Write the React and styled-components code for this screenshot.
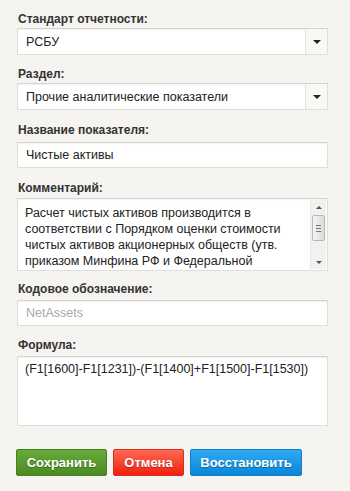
import React from 'react';
import styled, { createGlobalStyle } from 'styled-components';

const GlobalStyle = createGlobalStyle`
    body {
        margin: 0;
        background: #f5f4f0;
        font-family: "Liberation Sans", Arial, sans-serif;
        color: #222;
    }
`;

const Form = styled.div`
    width: 311px;
    padding: 11px 0 0 17px;
`;

const Group = styled.div`
    margin-bottom: ${p => p.gap || 11}px;
`;

const Label = styled.div`
    font-size: 12px;
    font-weight: bold;
    line-height: 16px;
    color: #333;
    margin-bottom: ${p => p.space || 1}px;
    padding-left: 1px;
`;

const Box = styled.div`
    box-sizing: border-box;
    background: #fff;
    border: 1px solid #e1ded9;
    border-top-color: #d6d3ce;
    box-shadow: inset 0 1px 2px rgba(0, 0, 0, 0.06);
    font-size: 12.5px;
    line-height: 16px;
`;

const Select = styled(Box)`
    height: 27px;
    display: flex;
    align-items: stretch;
`;

const SelectText = styled.div`
    flex: 1;
    display: flex;
    align-items: center;
    padding-left: 8px;
    color: #222;
`;

const Arrow = styled.div`
    width: 21px;
    border-left: 1px solid #e6e3de;
    background: #f8f8f7;
    display: flex;
    align-items: center;
    justify-content: center;

    &::after {
        content: "";
        border-left: 4px solid transparent;
        border-right: 4px solid transparent;
        border-top: 4px solid #222;
    }
`;

const Input = styled(Box)`
    height: 26px;
    display: flex;
    align-items: center;
    padding-left: 8px;
    color: ${p => p.muted ? '#aaa' : '#222'};
`;

const TextBox = styled(Box)`
    height: ${p => p.h}px;
    display: flex;
    overflow: hidden;
`;

const Text = styled.div`
    flex: 1;
    padding: ${p => p.top || 6}px 6px 0 7px;
    white-space: nowrap;
`;

const Scrollbar = styled.div`
    width: 15px;
    margin: 1px 1px 1px 0;
    background: #f1f1f0;
    border-left: 1px solid #e9e8e6;
    display: flex;
    flex-direction: column;
    align-items: center;
`;

const ScrollBtn = styled.div`
    height: 14px;
    width: 100%;
    display: flex;
    align-items: center;
    justify-content: center;

    &::after {
        content: "";
        border-left: 3px solid transparent;
        border-right: 3px solid transparent;
        ${p => p.down ? 'border-top: 3px solid #555;' : 'border-bottom: 3px solid #555;'}
    }
`;

const Track = styled.div`
    flex: 1;
`;

const Thumb = styled.div`
    box-sizing: border-box;
    width: 13px;
    height: 26px;
    margin-top: 1px;
    border: 1px solid #b9b9b9;
    border-radius: 2px;
    background: linear-gradient(to right, #f4f4f4, #dcdcdc);
    display: flex;
    flex-direction: column;
    justify-content: center;
    align-items: center;
    gap: 2px;

    span {
        width: 5px;
        height: 1px;
        background: #777;
    }
`;

const Buttons = styled.div`
    display: flex;
    gap: 6px;
    margin: 23px 0 0 -1px;
`;

const colors = {
    green: ['#68aa3b', '#4c8a22', '#47801f'],
    red: ['#ff6a55', '#f0200d', '#dc2a1a'],
    blue: ['#2eaaf3', '#0a86d8', '#0f7fc6'],
};

const Button = styled.button`
    height: 27px;
    width: ${p => p.w}px;
    border: 1px solid ${p => colors[p.tone][2]};
    border-radius: 2px;
    background: linear-gradient(to bottom, ${p => colors[p.tone][0]}, ${p => colors[p.tone][1]});
    color: #fff;
    font-family: "Liberation Sans", Arial, sans-serif;
    font-size: 13px;
    font-weight: bold;
    text-shadow: 0 1px 1px rgba(0, 0, 0, 0.3);
    padding: 0;
`;

const commentLines = [
    'Расчет чистых активов производится в',
    'соответствии с Порядком оценки стоимости',
    'чистых активов акционерных обществ (утв.',
    'приказом Минфина РФ и Федеральной',
];

const App = () => (
    <>
        <GlobalStyle />
        <Form>
            <Group>
                <Label>Стандарт отчетности:</Label>
                <Select>
                    <SelectText>РСБУ</SelectText>
                    <Arrow />
                </Select>
            </Group>
            <Group gap={12}>
                <Label>Раздел:</Label>
                <Select>
                    <SelectText>Прочие аналитические показатели</SelectText>
                    <Arrow />
                </Select>
            </Group>
            <Group gap={12}>
                <Label space={4}>Название показателя:</Label>
                <Input>Чистые активы</Input>
            </Group>
            <Group gap={10}>
                <Label space={2}>Комментарий:</Label>
                <TextBox h={73}>
                    <Text>
                        {commentLines.map(line => <div key={line}>{line}</div>)}
                    </Text>
                    <Scrollbar>
                        <ScrollBtn />
                        <Thumb><span /><span /><span /></Thumb>
                        <Track />
                        <ScrollBtn down />
                    </Scrollbar>
                </TextBox>
            </Group>
            <Group gap={11}>
                <Label space={3}>Кодовое обозначение:</Label>
                <Input muted>NetAssets</Input>
            </Group>
            <Group gap={0}>
                <Label space={3}>Формула:</Label>
                <TextBox h={70}>
                    <Text top={4}>(F1[1600]-F1[1231])-(F1[1400]+F1[1500]-F1[1530])</Text>
                </TextBox>
            </Group>
            <Buttons>
                <Button tone="green" w={91}>Сохранить</Button>
                <Button tone="red" w={71}>Отмена</Button>
                <Button tone="blue" w={112}>Восстановить</Button>
            </Buttons>
        </Form>
    </>
);

export default App;
